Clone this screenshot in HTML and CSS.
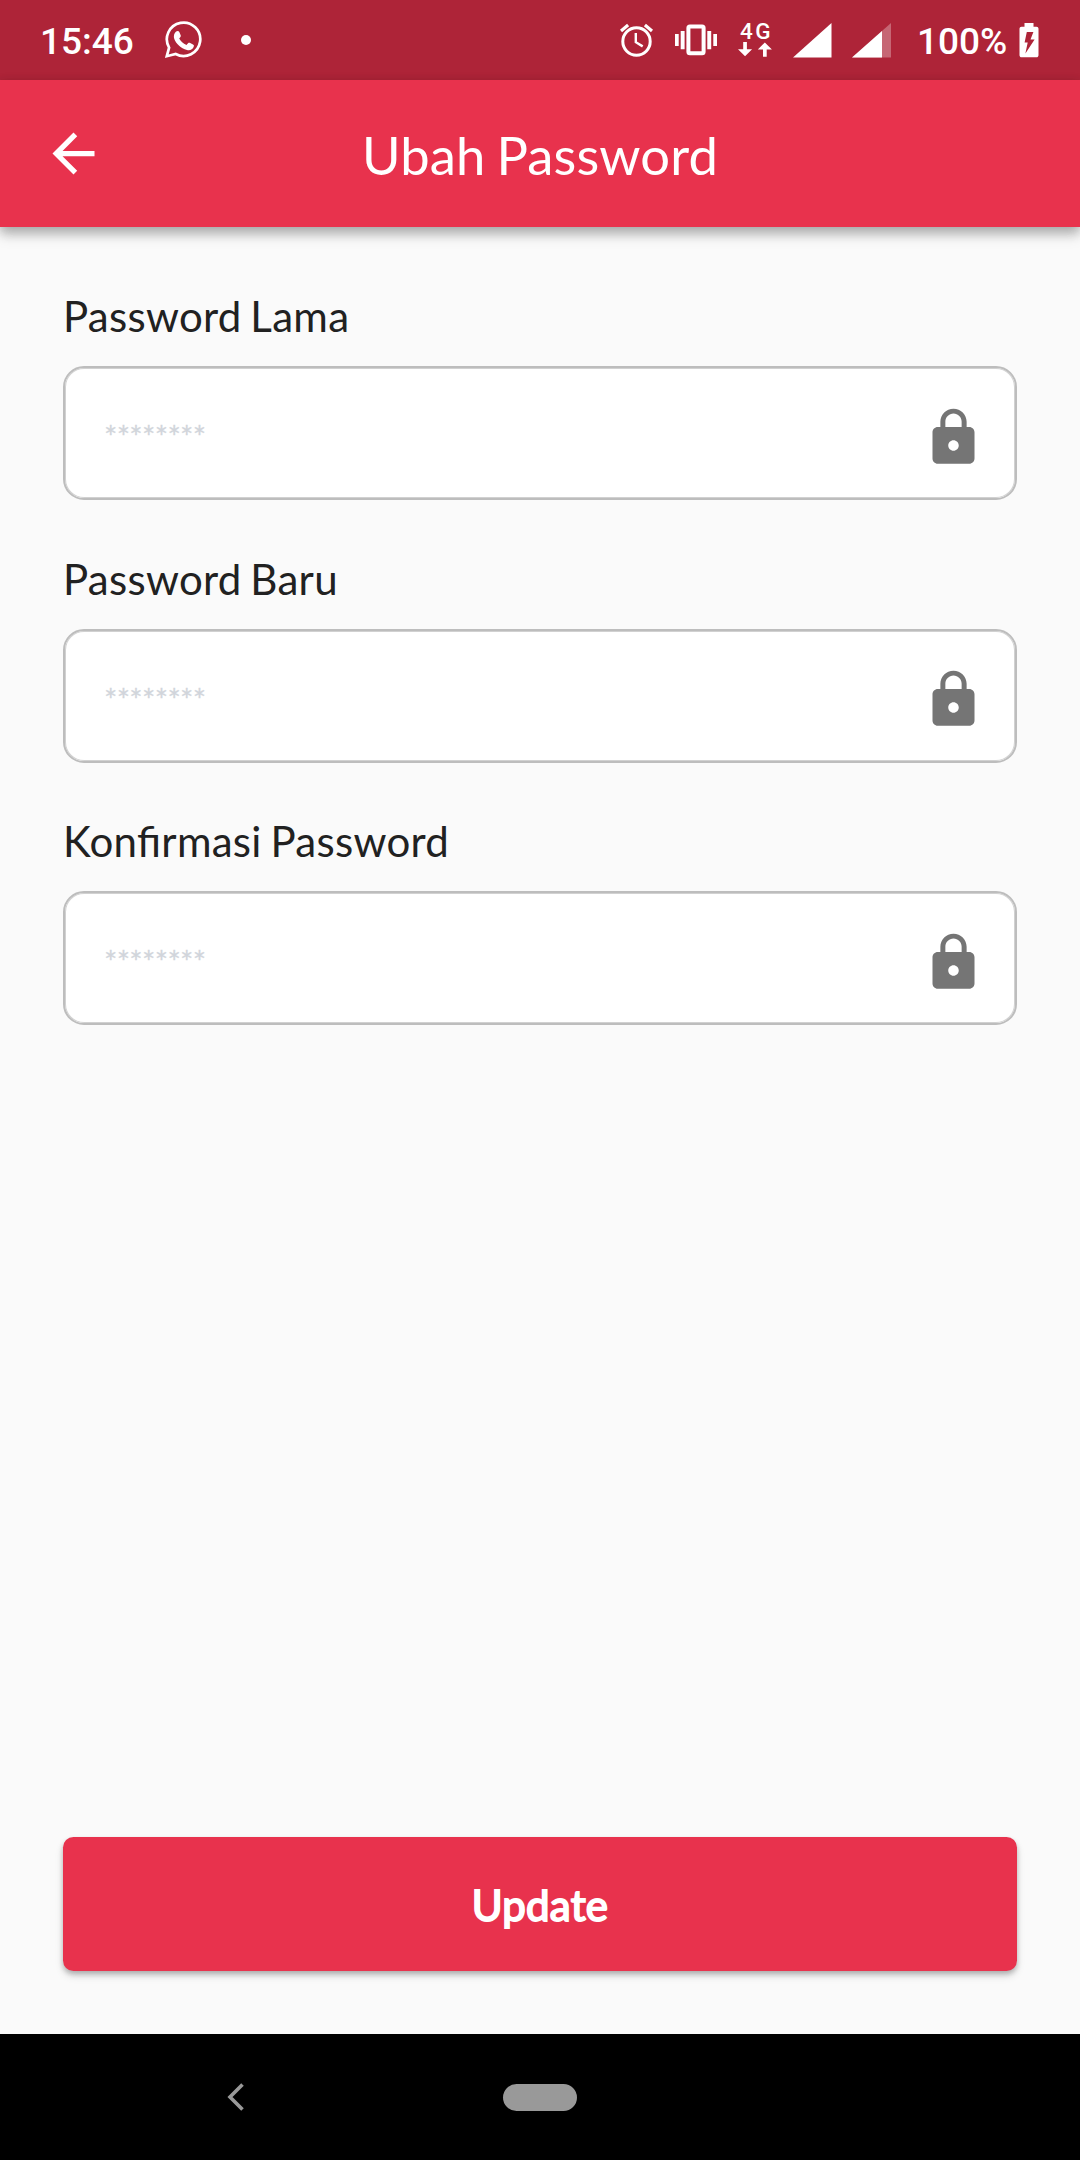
FILE: index.html
```html
<!DOCTYPE html>
<html lang="id">
<head>
<meta charset="utf-8">
<title>Ubah Password</title>
<link rel="stylesheet" href="styles.css">
</head>
<body>
<div class="screen">
  <div class="status-bar">
    <span class="clock">15:46</span>
    <svg class="whatsapp" width="40" height="40" viewBox="0 0 40 40" fill="none">
      <path d="M3.800 36.200L6.100 27.600A16.700 16.700 0 1 1 12.700 34Z" stroke="#fff" stroke-width="2.700"/>
      <path d="M13.100 11.600c1.200-1 2.600-.9 3.200.4l1.400 3.300c.4 1-.2 1.700-1.500 3.200 1.600 3 3.900 5.100 7.300 6.500 1.700-2.200 2.200-2.600 3.200-2.200l3.300 1.600c1 .5 1.100 1 .7 2.400-.9 2.800-3.900 3.900-6.700 3.200-6.400-1.600-10.900-6.200-12.700-10.900-1-2.800-.2-5.800 1.800-7.500Z" fill="#fff"/>
    </svg>
    <span class="dot"></span>
    <div class="indicators">
      <svg width="34" height="36" viewBox="0 0 34 36" fill="none" stroke="#fff">
        <circle cx="16.500" cy="19.500" r="13.700" stroke-width="3"/>
        <path d="M15.800 11v9.200l6.900 4.200" stroke-width="2.400"/>
        <path d="M1 9L8.100 3M32 9L24.900 3" stroke-width="3.200"/>
      </svg>
      <svg class="vibrate" width="42" height="32" viewBox="0 0 42 32">
        <path d="M0 10h3.700v12H0zM5.700 7h3.900v18.300H5.700zM32.300 7h3.900v18.300h-3.900zM38.300 10H42v12h-3.700z" fill="#fff"/>
        <rect x="13.400" y="2.400" width="15.200" height="26.800" rx="1.500" fill="none" stroke="#fff" stroke-width="4"/>
      </svg>
      <div class="network">
        <span class="network-type">4G</span>
        <svg width="34" height="15" viewBox="0 0 34 15" fill="#fff">
          <path d="M5.200 0h3.700v7.200h5.200L7.050 14.200 0 7.200h5.200zM25 14.700h3.700V7.500h5.200L26.850.5 19.800 7.500H25z"/>
        </svg>
      </div>
      <svg class="signal" width="39" height="35" viewBox="0 0 39 35">
        <path d="M0 34.500L38.500 0v34.500z" fill="#fff"/>
      </svg>
      <svg class="signal-second" width="39" height="35" viewBox="0 0 39 35">
        <path d="M0 34.500L39 0v34.500z" fill="#fff" fill-opacity=".3"/>
        <path d="M0 34.500L30 8v26.500z" fill="#fff"/>
      </svg>
      <span class="battery-level">100%</span>
      <svg class="battery" width="20" height="35" viewBox="0 0 20 35">
        <path fill="#fff" fill-rule="evenodd" d="M5.500 0h9v3.800h3c1.100 0 2 .9 2 2v26.400c0 1.200-.9 2.100-2 2.100h-15c-1.100 0-2-.9-2-2.100V5.800c0-1.100.9-2 2-2h3zM7.800 9L5.600 19.400h3.100L6.400 30.500l9.200-14h-4.100L14.400 9z"/>
      </svg>
    </div>
  </div>

  <header class="app-bar">
    <svg class="back" width="63" height="63" viewBox="0 0 24 24" fill="#fff"><path d="M20 11H7.830l5.590-5.590L12 4l-8 8 8 8 1.410-1.410L7.830 13H20v-2z"/></svg>
    <h1 class="title">Ubah Password</h1>
  </header>

  <main class="content">
    <div class="field">
      <label class="label">Password Lama</label>
      <div class="input"><span class="hint">********</span>
        <svg width="63" height="63" viewBox="0 0 24 24"><path class="lock" d="M18 8h-1V6c0-2.760-2.240-5-5-5S7 3.240 7 6v2H6c-1.100 0-2 .9-2 2v10c0 1.100.9 2 2 2h12c1.100 0 2-.9 2-2V10c0-1.100-.9-2-2-2zm-6 9c-1.100 0-2-.9-2-2s.9-2 2-2 2 .9 2 2-.9 2-2 2zm3.100-9H8.900V6c0-1.710 1.390-3.100 3.100-3.100s3.100 1.390 3.100 3.100v2z"/></svg>
      </div>
    </div>
    <div class="field">
      <label class="label">Password Baru</label>
      <div class="input"><span class="hint">********</span>
        <svg width="63" height="63" viewBox="0 0 24 24"><path class="lock" d="M18 8h-1V6c0-2.760-2.240-5-5-5S7 3.240 7 6v2H6c-1.100 0-2 .9-2 2v10c0 1.100.9 2 2 2h12c1.100 0 2-.9 2-2V10c0-1.100-.9-2-2-2zm-6 9c-1.100 0-2-.9-2-2s.9-2 2-2 2 .9 2 2-.9 2-2 2zm3.100-9H8.900V6c0-1.710 1.390-3.100 3.100-3.100s3.100 1.390 3.100 3.100v2z"/></svg>
      </div>
    </div>
    <div class="field">
      <label class="label">Konfirmasi Password</label>
      <div class="input"><span class="hint">********</span>
        <svg width="63" height="63" viewBox="0 0 24 24"><path class="lock" d="M18 8h-1V6c0-2.760-2.240-5-5-5S7 3.240 7 6v2H6c-1.100 0-2 .9-2 2v10c0 1.100.9 2 2 2h12c1.100 0 2-.9 2-2V10c0-1.100-.9-2-2-2zm-6 9c-1.100 0-2-.9-2-2s.9-2 2-2 2 .9 2 2-.9 2-2 2zm3.100-9H8.900V6c0-1.710 1.390-3.100 3.100-3.100s3.100 1.390 3.100 3.100v2z"/></svg>
      </div>
    </div>
    <button class="submit" type="button">Update</button>
  </main>

  <nav class="nav-bar">
    <svg class="nav-back" width="18" height="28" viewBox="0 0 18 28" fill="none"><path d="M15.500 1.500L3 14l12.500 12.500" stroke="#999" stroke-width="3.600"/></svg>
    <span class="home-pill"></span>
  </nav>
</div>
</body>
</html>
```

FILE: styles.css
```css
* {
  box-sizing: border-box;
}

body {
  margin: 0;
  background: #fafafa;
  font-family: Lato, "Liberation Sans", sans-serif;
}

svg {
  display: block;
  flex: none;
}

.screen {
  display: flex;
  flex-direction: column;
  width: 1080px;
  height: 2160px;
  overflow: hidden;
}

.status-bar {
  display: flex;
  align-items: center;
  height: 80px;
  padding: 0 41px 0 40px;
  background: #ae2438;
  color: #fff;
  font-family: Roboto, sans-serif;
}

.clock,
.battery-level {
  font-size: 37px;
  font-weight: 500;
  line-height: 44px;
  padding-top: 3px;
  white-space: nowrap;
}

.clock {
  width: 123px;
}

.dot {
  width: 10px;
  height: 10px;
  margin-left: 38px;
  border-radius: 50%;
  background: #fff;
}

.indicators {
  display: flex;
  align-items: center;
  margin-left: auto;
}

.vibrate {
  margin-left: 21px;
}

.network {
  display: flex;
  flex-direction: column;
  width: 34px;
  height: 36px;
  margin-left: 21px;
}

.network-type {
  height: 20px;
  padding-left: 2px;
  font-size: 22.500px;
  font-weight: 500;
  line-height: 19px;
  letter-spacing: 2.500px;
}

.signal {
  margin-left: 21px;
}

.signal-second {
  margin-left: 20px;
}

.battery-level {
  width: 91px;
  margin-left: 26px;
}

.battery {
  margin-left: 11px;
}

.app-bar {
  position: relative;
  display: grid;
  grid-template-columns: 63px 1fr 63px;
  align-items: center;
  height: 147px;
  padding: 0 42px;
  background: #e8324d;
  box-shadow: 0 5px 11px rgba(0, 0, 0, .2), 0 10px 13px rgba(0, 0, 0, .1), 0 3px 12px rgba(0, 0, 0, .1);
}

.title {
  margin: 0;
  padding-top: 2px;
  color: #fff;
  font-size: 52.500px;
  font-weight: 400;
  line-height: 63px;
  letter-spacing: .15px;
  word-spacing: -2.500px;
  text-align: center;
}

.content {
  display: flex;
  flex: 1;
  flex-direction: column;
  padding: 63px;
}

.field {
  display: flex;
  flex-direction: column;
  gap: 25px;
  height: 210px;
  margin-bottom: 52.500px;
}

.label {
  padding-top: 1px;
  color: #212121;
  font-size: 42px;
  line-height: 50.400px;
  letter-spacing: .28px;
  word-spacing: -2.200px;
  font-feature-settings: "liga" 1;
}

.input {
  display: flex;
  align-items: center;
  justify-content: space-between;
  flex: 1;
  padding: 8px 30px 0 39px;
  border: 2px solid #bdbdbd;
  border-radius: 21px;
  background: #fff;
  box-shadow: inset 0 0 0 1px rgba(189, 189, 189, .7);
}

.lock {
  fill: #757575;
}

.hint {
  margin-top: -2px;
  color: #d1d5db;
  font-size: 31.500px;
  line-height: 38px;
  letter-spacing: -.7px;
  -webkit-text-stroke: .3px #d1d5db;
}

.submit {
  height: 134px;
  margin-top: auto;
  padding: 2px 0 0;
  border: 0;
  border-radius: 10.500px;
  background: #e8324d;
  box-shadow: 0 3px 5px rgba(0, 0, 0, .22), 0 5px 8px rgba(0, 0, 0, .12);
  color: #fff;
  font-family: inherit;
  font-size: 42px;
  font-weight: 400;
  letter-spacing: .25px;
  -webkit-text-stroke: 1.900px #fff;
}

.nav-bar {
  display: flex;
  align-items: center;
  height: 126px;
  padding-left: 227px;
  background: #000;
}

.home-pill {
  width: 74px;
  height: 27px;
  margin-left: 258px;
  border-radius: 14px;
  background: #999;
}
```
